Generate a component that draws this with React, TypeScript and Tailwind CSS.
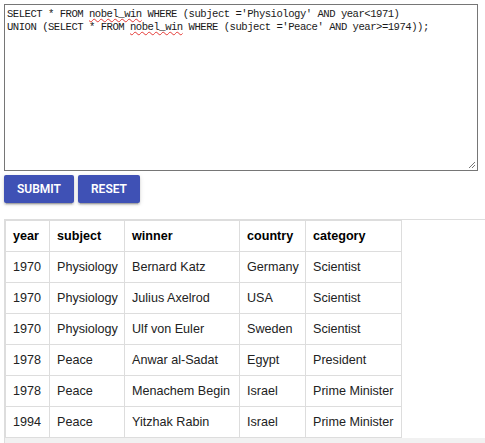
import React from "react";

const rows = [
  ["1970", "Physiology", "Bernard Katz", "Germany", "Scientist"],
  ["1970", "Physiology", "Julius Axelrod", "USA", "Scientist"],
  ["1970", "Physiology", "Ulf von Euler", "Sweden", "Scientist"],
  ["1978", "Peace", "Anwar al-Sadat", "Egypt", "President"],
  ["1978", "Peace", "Menachem Begin", "Israel", "Prime Minister"],
  ["1994", "Peace", "Yitzhak Rabin", "Israel", "Prime Minister"],
];

const cols = [
  { label: "year", w: "w-[44px]" },
  { label: "subject", w: "w-[75px]" },
  { label: "winner", w: "w-[115px]" },
  { label: "country", w: "w-[66px]" },
  { label: "category", w: "w-[96px]" },
];

const Typo = ({ children }: { children: React.ReactNode }) => (
  <span className="underline decoration-wavy decoration-[#e53935] decoration-[0.5px] underline-offset-[1px]">{children}</span>
);

export default function App() {
  return (
    <div className="bg-white pl-[4px] pt-[4px] w-[485px] overflow-hidden" style={{ fontFamily: "'Liberation Sans', Arial, sans-serif" }}>
      {/* query box */}
      <div className="relative w-[474px] h-[167px] border border-[#767676] px-[2px] pt-[3px] text-[10.6px] leading-[13px] tracking-[-0.5px] text-[#1a1a1a] font-['Liberation_Mono',monospace] whitespace-pre">
        <div>SELECT * FROM <Typo>nobel_win</Typo> WHERE (subject ='Physiology' AND year&lt;1971)</div>
        <div>UNION (SELECT * FROM <Typo>nobel_win</Typo> WHERE (subject ='Peace' AND year&gt;=1974));</div>
        <svg className="absolute right-[1px] bottom-[1px]" width="9" height="9" viewBox="0 0 9 9">
          <path d="M8 2 L2 8 M8 5 L5 8" stroke="#777" strokeWidth="1" />
        </svg>
      </div>

      {/* actions */}
      <div className="flex gap-[4px] mt-[4px]">
        {["SUBMIT", "RESET"].map(b => (
          <button
            key={b}
            className="h-[28px] px-[13px] rounded-[2px] bg-[#3f51b5] text-white text-[12px] font-semibold font-['Roboto',sans-serif] shadow-[0_2px_2px_0_rgba(0,0,0,0.14),0_3px_1px_-2px_rgba(0,0,0,0.2),0_1px_5px_0_rgba(0,0,0,0.12)]"
          >
            {b}
          </button>
        ))}
      </div>

      {/* result */}
      <div className="mt-[16px] border-l border-t border-[#ddd]">
        <table className="w-[397px] table-fixed border-collapse border border-[#ddd] text-[12.6px] leading-[16px] text-[#222]">
          <thead>
            <tr>
              {cols.map(c => (
                <th key={c.label} className={`${c.w} border border-[#ddd] px-[7px] py-[7px] text-left font-bold text-black`}>{c.label}</th>
              ))}
            </tr>
          </thead>
          <tbody>
            {rows.map((r, i) => (
              <tr key={i}>
                {r.map((v, j) => (
                  <td key={j} className="border border-[#ddd] px-[7px] py-[7px] whitespace-nowrap">{v}</td>
                ))}
              </tr>
            ))}
          </tbody>
        </table>
        <div className="h-[20px] bg-[#f1f1f1]" />
      </div>
    </div>
  );
}
